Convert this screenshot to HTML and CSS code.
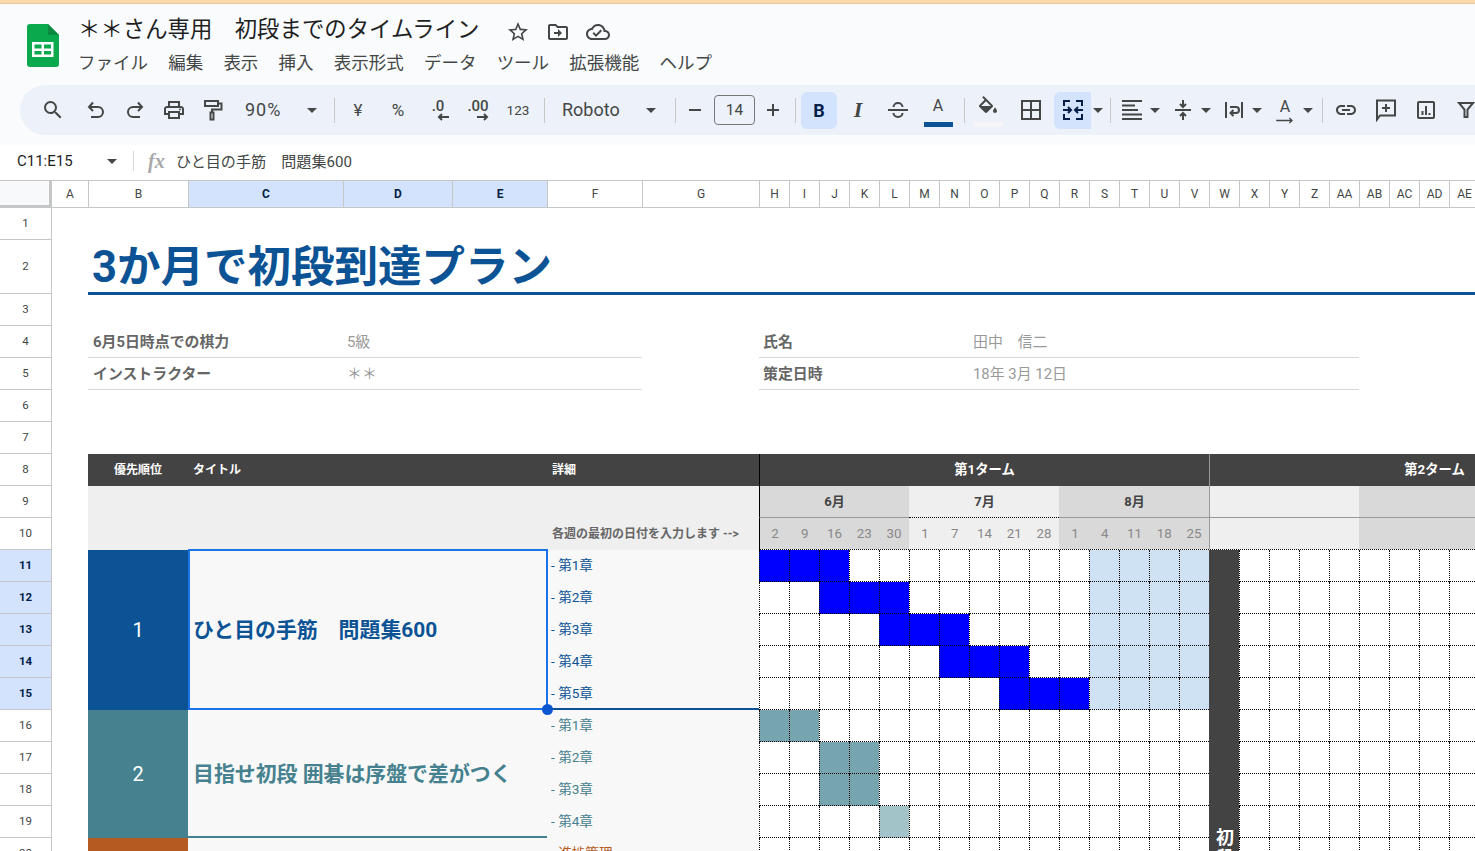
FILE: index.html
```html
<!DOCTYPE html>
<html lang="ja">
<head>
    <meta charset="UTF-8">
    <title>＊＊さん専用　初段までのタイムライン</title>
    <link rel="stylesheet" href="styles.css">
</head>
<body>
    <div class="stripe"></div>

    <header class="app-header">
        <div class="top">
            <svg class="logo" viewBox="0 0 32 43">
                <path d="M3 0H21L32 11V40a3 3 0 0 1-3 3H3a3 3 0 0 1-3-3V3a3 3 0 0 1 3-3z" fill="#0ba94e"/>
                <path d="M21 0L32 11H21z" fill="#0a8a3f"/>
                <path d="M5 18h21.5v15H5z" fill="#fff"/>
                <path d="M7.5 20.5h7v4h-7zM17 20.5h7v4h-7zM7.5 27h7v3.5h-7zM17 27h7v3.5h-7z" fill="#0ba94e"/>
            </svg>
            <div class="doc">
                <div class="doc-row">
                    <span class="doc-title">＊＊さん専用　初段までのタイムライン</span>
                    <div class="doc-icons">
                        <svg class="ic" viewBox="0 0 24 24"><path d="M22 9.24l-7.19-.62L12 2 9.19 8.63 2 9.24l5.46 4.73L5.82 21 12 17.27 18.18 21l-1.63-7.03L22 9.24zM12 15.4l-3.76 2.27 1-4.28-3.32-2.88 4.38-.38L12 6.1l1.71 4.04 4.38.38-3.32 2.88 1 4.28L12 15.4z"/></svg>
                        <svg class="ic" viewBox="0 0 24 24"><path d="M20 6h-8l-2-2H4c-1.1 0-2 .9-2 2v12c0 1.1.9 2 2 2h16c1.1 0 2-.9 2-2V8c0-1.1-.9-2-2-2zm0 12H4V6h5.17l2 2H20v10zm-8-4H8v-2h4V9l4 4-4 4v-3z"/></svg>
                        <svg class="ic" viewBox="0 0 24 24"><path d="M19.35 10.04C18.67 6.59 15.64 4 12 4 9.11 4 6.6 5.64 5.35 8.04 2.34 8.36 0 10.91 0 14c0 3.31 2.69 6 6 6h13c2.76 0 5-2.24 5-5 0-2.64-2.05-4.78-4.65-4.96zM19 18H6c-2.21 0-4-1.79-4-4 0-2.05 1.53-3.76 3.56-3.97l1.07-.11.5-.95C8.08 7.14 9.94 6 12 6c2.62 0 4.88 1.86 5.39 4.43l.3 1.5 1.53.11c1.56.1 2.78 1.41 2.78 2.96 0 1.65-1.35 3-3 3zm-9-3.82l-2.09-2.09L6.5 13.5 10 17l6.01-6.01-1.41-1.41z"/></svg>
                    </div>
                </div>
                <nav class="menu">
                    <span>ファイル</span><span>編集</span><span>表示</span><span>挿入</span><span>表示形式</span><span>データ</span><span>ツール</span><span>拡張機能</span><span>ヘルプ</span>
                </nav>
            </div>
        </div>

        <div class="toolbar">
            <div class="btn search"><svg class="ic" viewBox="0 0 24 24"><path d="M15.5 14h-.79l-.28-.27A6.471 6.471 0 0 0 16 9.5 6.5 6.5 0 1 0 9.5 16c1.61 0 3.09-.59 4.23-1.57l.27.28v.79l5 4.99L20.49 19l-4.99-5zm-6 0C7.01 14 5 11.99 5 9.5S7.01 5 9.5 5 14 7.01 14 9.5 11.99 14 9.5 14z"/></svg></div>
            <div class="btn narrow"><svg class="ic line" viewBox="0 0 24 24"><path d="M9 4.500L5 9l4 4M5.500 9H14a5 5 0 0 1 0 10H7"/></svg></div>
            <div class="btn narrow"><svg class="ic line" viewBox="0 0 24 24"><path d="M15 4.500L19 9l-4 4M18.500 9H10a5 5 0 0 0 0 10h7"/></svg></div>
            <div class="btn narrow"><svg class="ic" viewBox="0 0 24 24"><path d="M19 8h-1V3H6v5H5c-1.66 0-3 1.34-3 3v6h4v4h12v-4h4v-6c0-1.66-1.34-3-3-3zM8 5h8v3H8V5zm8 12v2H8v-4h8v2zm2-2v-2H6v2H4v-4c0-.55.45-1 1-1h14c.55 0 1 .45 1 1v4h-2z"/><circle cx="18" cy="11.5" r="1"/></svg></div>
            <div class="btn narrow"><svg class="ic line" viewBox="0 0 24 24"><path d="M4 3h13v5H4zM17 5.500h3.500v6H11v3M9.500 14.500h3v7h-3z"/></svg></div>
            <div class="select zoom"><span>90%</span><i class="caret"></i></div>
            <i class="sep first"></i>
            <div class="btn text">¥</div>
            <div class="btn text">%</div>
            <div class="btn stack"><span>.0</span><svg viewBox="0 0 12 8"><path d="M12 4H2M5 1L2 4l3 3"/></svg></div>
            <div class="btn stack"><span>.00</span><svg viewBox="0 0 12 8"><path d="M0 4h10M7 1l3 3-3 3"/></svg></div>
            <div class="btn small">123</div>
            <i class="sep"></i>
            <div class="select font"><span>Roboto</span><i class="caret"></i></div>
            <i class="sep"></i>
            <div class="btn minus"><svg class="ic line" viewBox="0 0 24 24"><path d="M6 12h12"/></svg></div>
            <div class="size-box">14</div>
            <div class="btn plus"><svg class="ic line" viewBox="0 0 24 24"><path d="M6 12h12M12 6v12"/></svg></div>
            <i class="sep"></i>
            <div class="btn active bold">B</div>
            <div class="btn italic">I</div>
            <div class="btn"><svg class="ic line" viewBox="0 0 24 24"><path d="M2 12h20M7.500 9a4.500 4 0 0 1 9 0M7.500 15a4.500 4 0 0 0 9 0"/></svg></div>
            <div class="btn swatch"><span class="swatch-a">A</span><i class="swatch-bar blue"></i></div>
            <i class="sep"></i>
            <div class="btn swatch"><svg class="ic fill-ic" viewBox="0 0 24 24"><path d="M16.56 8.94L7.62 0 6.21 1.41l2.38 2.38-5.15 5.15c-.59.59-.59 1.54 0 2.12l5.5 5.5c.29.29.68.44 1.06.44s.77-.15 1.06-.44l5.5-5.5c.59-.58.59-1.53 0-2.12zM5.21 10L10 5.21 14.79 10H5.21zM19 11.5s-2 2.17-2 3.500c0 1.1.9 2 2 2s2-.9 2-2c0-1.33-2-3.500-2-3.500z"/><path d="M5 10h10l-5 5z"/></svg><i class="swatch-bar pale"></i></div>
            <div class="btn borders"><svg class="ic line" viewBox="0 0 24 24"><path d="M3 3h18v18H3zM12 3v18M3 12h18"/></svg></div>
            <div class="btn active merge"><svg class="ic line navy" viewBox="0 0 24 24"><path d="M3 8V3h6M21 8V3h-6M3 16v5h6M21 16v5h-6M2 12h8M7 9l3 3-3 3M22 12h-8M17 9l-3 3 3 3"/></svg></div>
            <div class="merge-caret"><i class="caret"></i></div>
            <i class="sep"></i>
            <div class="combos">
                <div class="combo"><span class="combo-ic"><svg class="ic line" viewBox="0 0 24 24"><path d="M2 3h20M2 7.500h13M2 12h16M2 16.500h20M2 21h20"/></svg></span><i class="caret"></i></div>
                <div class="combo"><span class="combo-ic"><svg class="ic line" viewBox="0 0 24 24"><path d="M4 12h16M12 2v6.500M9 6l3 3 3-3M12 22v-6.500M9 18l3-3 3 3"/></svg></span><i class="caret"></i></div>
                <div class="combo"><span class="combo-ic"><svg class="ic line" viewBox="0 0 24 24"><path d="M4 4v16M20 4v16M8 9h6a3 3 0 0 1 0 6h-5M11.500 12L8.500 15l3 3"/></svg></span><i class="caret"></i></div>
                <div class="combo"><span class="combo-ic rotate"><span class="swatch-a">A</span><svg viewBox="0 0 20 8"><path d="M0 4h18M15 1l3 3-3 3"/></svg></span><i class="caret"></i></div>
            </div>
            <i class="sep"></i>
            <div class="btn"><svg class="ic" viewBox="0 0 24 24"><path d="M17 7h-4v2h4c1.65 0 3 1.35 3 3s-1.35 3-3 3h-4v2h4c2.76 0 5-2.24 5-5s-2.24-5-5-5zm-6 8H7c-1.65 0-3-1.35-3-3s1.35-3 3-3h4V7H7c-2.76 0-5 2.24-5 5s2.24 5 5 5h4v-2zm-3-4h8v2H8z"/></svg></div>
            <div class="btn"><svg class="ic line" viewBox="0 0 24 24"><path d="M3 2.500h18v15H6l-3 4zM12 6v8M8 10h8"/></svg></div>
            <div class="btn"><svg class="ic line" viewBox="0 0 24 24"><path d="M5 4h14a1 1 0 0 1 1 1v14a1 1 0 0 1-1 1H5a1 1 0 0 1-1-1V5a1 1 0 0 1 1-1zM8.500 17v-4M12 17V8M15.500 17v-2"/></svg></div>
            <div class="btn"><svg class="ic line" viewBox="0 0 24 24"><path d="M5 5h14l-5.500 6.500V19h-3v-7.500z"/></svg></div>
        </div>
    </header>

    <div class="formula-bar">
        <div class="name-box"><span>C11:E15</span><i class="caret"></i></div>
        <i class="formula-sep"></i>
        <span class="fx">fx</span>
        <span class="formula-text">ひと目の手筋　問題集600</span>
    </div>

    <main class="sheet">
        <div class="corner"></div>
        <div class="colhead">
            <div>A</div><div>B</div><div class="on">C</div><div class="on">D</div><div class="on">E</div><div>F</div><div>G</div><div>H</div><div>I</div><div>J</div><div>K</div><div>L</div><div>M</div><div>N</div><div>O</div><div>P</div><div>Q</div><div>R</div><div>S</div><div>T</div><div>U</div><div>V</div><div>W</div><div>X</div><div>Y</div><div>Z</div><div>AA</div><div>AB</div><div>AC</div><div>AD</div><div>AE</div>
        </div>
        <div class="rowhead">
            <div>1</div><div>2</div><div>3</div><div>4</div><div>5</div><div>6</div><div>7</div><div>8</div><div>9</div><div>10</div><div class="on">11</div><div class="on">12</div><div class="on">13</div><div class="on">14</div><div class="on">15</div><div>16</div><div>17</div><div>18</div><div>19</div><div>20</div>
        </div>

        <div class="plan-title">3か月で初段到達プラン</div>

        <div class="info-label left r4">6月5日時点での棋力</div>
        <div class="info-value left r4">5級</div>
        <div class="info-label left r5">インストラクター</div>
        <div class="info-value left r5">＊＊</div>
        <div class="info-label right r4">氏名</div>
        <div class="info-value right r4">田中　信二</div>
        <div class="info-label right r5">策定日時</div>
        <div class="info-value right r5">18年 3月 12日</div>

        <div class="band band-rank">優先順位</div>
        <div class="band band-title">タイトル</div>
        <div class="band band-detail">詳細</div>
        <div class="band term term-one">第1ターム</div>
        <div class="band term term-two">第2ターム</div>

        <div class="subfill"></div>
        <div class="subhead">各週の最初の日付を入力します --&gt;</div>

        <div class="month dark m1">6月</div>
        <div class="month light dotted m2">7月</div>
        <div class="month dark m3">8月</div>
        <div class="month light m4"></div>
        <div class="month dark m5"></div>

        <div class="dates dark m1"><span>2</span><span>9</span><span>16</span><span>23</span><span>30</span></div>
        <div class="dates light m2"><span>1</span><span>7</span><span>14</span><span>21</span><span>28</span></div>
        <div class="dates dark m3"><span>1</span><span>4</span><span>11</span><span>18</span><span>25</span></div>
        <div class="dates light m4"></div>
        <div class="dates dark m5"></div>

        <div class="rank group-1 c-blue">1</div>
        <div class="topic group-1 t-blue">ひと目の手筋　問題集600</div>
        <div class="details group-1 t-blue">
            <div>- 第1章</div><div>- 第2章</div><div>- 第3章</div><div>- 第4章</div><div>- 第5章</div>
        </div>
        <div class="selection"><i class="handle"></i></div>

        <div class="rank group-2 c-teal">2</div>
        <div class="topic group-2 t-teal">目指せ初段 囲碁は序盤で差がつく</div>
        <div class="details group-2 t-teal">
            <div>- 第1章</div><div>- 第2章</div><div>- 第3章</div><div>- 第4章</div>
        </div>

        <div class="rank group-3 c-orange"></div>
        <div class="topic group-3"></div>
        <div class="details group-3 t-orange"><div>- 進捗管理</div></div>

        <div class="gantt">
            <div class="term-break">初段到達</div>
            <i class="bar"></i><i class="bar"></i><i class="bar"></i><i></i><i></i><i></i><i></i><i></i><i></i><i></i><i></i><i class="sky"></i><i class="sky"></i><i class="sky"></i><i class="sky"></i><i></i><i></i><i></i><i></i><i></i><i></i><i></i><i></i>
            <i></i><i></i><i class="bar"></i><i class="bar"></i><i class="bar"></i><i></i><i></i><i></i><i></i><i></i><i></i><i class="sky"></i><i class="sky"></i><i class="sky"></i><i class="sky"></i><i></i><i></i><i></i><i></i><i></i><i></i><i></i><i></i>
            <i></i><i></i><i></i><i></i><i class="bar"></i><i class="bar"></i><i class="bar"></i><i></i><i></i><i></i><i></i><i class="sky"></i><i class="sky"></i><i class="sky"></i><i class="sky"></i><i></i><i></i><i></i><i></i><i></i><i></i><i></i><i></i>
            <i></i><i></i><i></i><i></i><i></i><i></i><i class="bar"></i><i class="bar"></i><i class="bar"></i><i></i><i></i><i class="sky"></i><i class="sky"></i><i class="sky"></i><i class="sky"></i><i></i><i></i><i></i><i></i><i></i><i></i><i></i><i></i>
            <i></i><i></i><i></i><i></i><i></i><i></i><i></i><i></i><i class="bar"></i><i class="bar"></i><i class="bar"></i><i class="sky"></i><i class="sky"></i><i class="sky"></i><i class="sky"></i><i></i><i></i><i></i><i></i><i></i><i></i><i></i><i></i>
            <i class="teal"></i><i class="teal"></i><i></i><i></i><i></i><i></i><i></i><i></i><i></i><i></i><i></i><i></i><i></i><i></i><i></i><i></i><i></i><i></i><i></i><i></i><i></i><i></i><i></i>
            <i></i><i></i><i class="teal"></i><i class="teal"></i><i></i><i></i><i></i><i></i><i></i><i></i><i></i><i></i><i></i><i></i><i></i><i></i><i></i><i></i><i></i><i></i><i></i><i></i><i></i>
            <i></i><i></i><i class="teal"></i><i class="teal"></i><i></i><i></i><i></i><i></i><i></i><i></i><i></i><i></i><i></i><i></i><i></i><i></i><i></i><i></i><i></i><i></i><i></i><i></i><i></i>
            <i></i><i></i><i></i><i></i><i class="pale-teal"></i><i></i><i></i><i></i><i></i><i></i><i></i><i></i><i></i><i></i><i></i><i></i><i></i><i></i><i></i><i></i><i></i><i></i><i></i>
            <i></i><i></i><i></i><i></i><i></i><i></i><i></i><i></i><i></i><i></i><i></i><i></i><i></i><i></i><i></i><i></i><i></i><i></i><i></i><i></i><i></i><i></i><i></i>
        </div>
    </main>
</body>
</html>
```

FILE: styles.css
```css
* {
    box-sizing: border-box;
}
body {
    margin: 0;
    height: 851px;
    overflow: hidden;
    background-color: #fff;
    color: #444746;
    font-family: Roboto, "Noto Sans CJK JP", sans-serif;
}

.stripe {
    height: 4px;
    background-color: #fdd9ae;
    border-bottom: 1px solid #e3c69f;
}

/* App header */
.app-header {
    height: 141px;
    background-color: #f9fbfd;
}
.top {
    display: flex;
    height: 81px;
    padding-left: 27px;
}
.logo {
    width: 32px;
    height: 43px;
    margin-top: 20px;
    margin-right: 20px;
}
.doc {
    margin-left: -1px;
    padding-top: 8px;
}
.doc-row {
    display: flex;
    align-items: center;
    height: 34px;
}
.doc-title {
    padding-bottom: 4px;
    font-size: 22.4px;
    color: #1f1f1f;
    white-space: nowrap;
}
.doc-icons {
    display: flex;
    gap: 16px;
    margin-left: 27px;
    margin-top: 5px;
}
.menu {
    display: flex;
    gap: 20.2px;
    height: 32px;
    align-items: center;
    padding-bottom: 2px;
    font-size: 17.5px;
    color: #444746;
    white-space: nowrap;
}

.ic {
    width: 24px;
    height: 24px;
    fill: #444746;
    flex: none;
}
.ic.line {
    fill: none;
    stroke: #444746;
    stroke-width: 2;
}
.ic.navy {
    stroke: #041e49;
}

/* Toolbar */
.toolbar {
    display: flex;
    align-items: center;
    height: 50px;
    margin-left: 20px;
    padding-left: 13px;
    background-color: #edf2fa;
    border-radius: 25px 0 0 25px;
    overflow: hidden;
}
.btn {
    display: flex;
    align-items: center;
    justify-content: center;
    flex: none;
    width: 40px;
    height: 37px;
}
.btn.search {
    margin-right: 3.5px;
}
.btn.narrow {
    width: 39px;
}
.btn.text {
    font-size: 17px;
}
.btn.small {
    font-size: 13.5px;
}
.btn.stack {
    flex-direction: column;
    align-items: center;
    line-height: 13px;
    font-size: 15px;
    font-weight: 500;
}
.btn.stack svg {
    width: 12px;
    height: 8px;
    margin-left: 10px;
    fill: none;
    stroke: #444746;
    stroke-width: 2;
}
.caret {
    display: block;
    flex: none;
    width: 0;
    height: 0;
    border-left: 5px solid transparent;
    border-right: 5px solid transparent;
    border-top: 5px solid #444746;
}
.select {
    display: flex;
    align-items: center;
    justify-content: space-between;
    flex: none;
    font-size: 18px;
}
.select span {
    margin-top: -2px;
}
.select.zoom {
    width: 92.5px;
    padding-left: 12.5px;
    padding-right: 8px;
    letter-spacing: 1px;
}
.select.font {
    width: 121px;
    padding-left: 14px;
    padding-right: 13px;
}
.sep {
    flex: none;
    width: 1px;
    height: 25px;
    margin-left: 6px;
    margin-right: 3px;
    background-color: #c7c7c7;
}
.sep.first {
    margin-left: 9px;
}
.btn.minus {
    width: 32px;
}
.size-box {
    flex: none;
    width: 41px;
    height: 30px;
    margin-left: 3px;
    border: 1px solid #747775;
    border-radius: 4px;
    font-size: 15.5px;
    line-height: 28px;
    text-align: center;
}
.btn.plus {
    width: 33px;
    margin-left: 1px;
}
.btn.active {
    background-color: #d3e3fd;
    color: #041e49;
    border-radius: 6px;
}
.btn.bold {
    width: 36px;
    margin-left: 2px;
    margin-right: 1px;
    font-size: 18px;
    font-weight: 700;
}
.btn.italic {
    font-family: "Liberation Serif", serif;
    font-style: italic;
    font-weight: 700;
    font-size: 22px;
}
.btn.swatch {
    position: relative;
}
.swatch-a {
    font-size: 16px;
    line-height: 20px;
}
.btn.swatch .swatch-a {
    margin-top: -8px;
}
.swatch-bar {
    position: absolute;
    left: 6px;
    bottom: 2px;
    width: 29px;
    height: 5px;
}
.swatch-bar.blue {
    background-color: #0b5394;
}
.swatch-bar.pale {
    background-color: #f5f5f5;
}
.fill-ic {
    margin-top: -4px;
}
.btn.borders {
    margin-left: 3px;
}
.btn.merge {
    width: 37px;
    margin-left: 3px;
    border-radius: 6px 0 0 6px;
}
.merge-caret {
    flex: none;
    width: 13px;
    padding-left: 2px;
}
.combos {
    display: flex;
    flex: none;
    width: 202px;
}
.combo {
    display: flex;
    align-items: center;
    flex: none;
    width: 51px;
}
.combo-ic {
    display: flex;
    align-items: center;
    justify-content: center;
    width: 36px;
}
.combo-ic.rotate {
    flex-direction: column;
}
.combo-ic.rotate svg {
    width: 18px;
    height: 7px;
    fill: none;
    stroke: #444746;
    stroke-width: 1.6;
}

/* Formula bar */
.formula-bar {
    display: flex;
    align-items: center;
    height: 35px;
    padding-bottom: 3px;
    background-color: #fff;
}
.name-box {
    display: flex;
    align-items: center;
    justify-content: space-between;
    width: 100px;
    margin-left: 17px;
    font-size: 15px;
    color: #1f1f1f;
}
.formula-sep {
    width: 1px;
    height: 20px;
    margin-left: 16px;
    background-color: #d9d9d9;
}
.fx {
    width: 28px;
    margin-left: 14px;
    font-family: "Liberation Serif", serif;
    font-style: italic;
    font-weight: 700;
    font-size: 20px;
    color: #a8a8a8;
}
.formula-text {
    margin-top: -3px;
    font-size: 15.1px;
    color: #444746;
    white-space: nowrap;
}

/* Sheet grid. Line numbers: column A = 2, row n = n + 1 */
.sheet {
    display: grid;
    grid-template-columns: 52px 36px 100px 155px 109px 95px 95px 117px repeat(40, 30px);
    grid-template-rows: 28px 32px 54px repeat(30, 32px);
    height: 671px;
    overflow: hidden;
    background-color: #fff;
    font-size: 12px;
}
.corner {
    grid-column: 1;
    grid-row: 1;
    background-color: #f8f9fa;
    border-top: 1px solid #c4c7c5;
    border-right: 3px solid #c4c7c5;
    border-bottom: 3px solid #c4c7c5;
}
.colhead {
    grid-column: 2 / -1;
    grid-row: 1;
    display: grid;
    grid-template-columns: subgrid;
}
.colhead div {
    display: flex;
    align-items: center;
    justify-content: center;
    border-top: 1px solid #c4c7c5;
    border-bottom: 1px solid #c4c7c5;
    border-left: 1px solid #c4c7c5;
    font-size: 12px;
    color: #444746;
}
.colhead div:first-child {
    border-left: 0;
}
.rowhead {
    grid-column: 1;
    grid-row: 2 / -1;
    display: grid;
    grid-template-rows: subgrid;
}
.rowhead div {
    display: flex;
    align-items: center;
    justify-content: center;
    padding-bottom: 2px;
    border-right: 1px solid #c4c7c5;
    border-bottom: 1px solid #c4c7c5;
    font-size: 11.5px;
    color: #444746;
}
.colhead .on, .rowhead .on {
    background-color: #d3e3fd;
    color: #041e49;
    font-weight: 700;
}

.plan-title {
    grid-column: 3 / -1;
    grid-row: 3;
    display: flex;
    align-items: center;
    margin-bottom: -1px;
    padding-left: 4px;
    padding-top: 4px;
    border-bottom: 3px solid #0b5394;
    color: #0b5394;
    font-size: 43.5px;
    font-weight: 700;
    line-height: 1;
    white-space: nowrap;
}

.info-label, .info-value {
    display: flex;
    align-items: center;
    padding-left: 4px;
    padding-bottom: 2px;
    border-bottom: 1px solid #d9d9d9;
    font-size: 14.9px;
    white-space: pre;
}
.info-label {
    color: #666;
    font-weight: 700;
}
.info-value {
    color: #999;
}
.r4 { grid-row: 5; }
.r5 { grid-row: 6; }
.info-label.left { grid-column: 3 / 5; padding-left: 5px; }
.info-value.left { grid-column: 5 / 8; }
.info-label.right { grid-column: 9 / 16; }
.info-value.right { grid-column: 16 / 29; }

/* Table header */
.band {
    grid-row: 9;
    display: flex;
    align-items: center;
    padding-bottom: 4px;
    background-color: #434343;
    color: #fff;
    font-size: 12px;
    font-weight: 700;
}
.band-rank {
    grid-column: 3;
    justify-content: center;
}
.band-title {
    grid-column: 4 / 7;
    padding-left: 5px;
}
.band-detail {
    grid-column: 7 / 9;
    padding-left: 5px;
}
.term {
    justify-content: center;
    font-size: 13.3px;
}
.term-one {
    grid-column: 9 / 24;
    border-left: 1px solid #000;
}
.term-two {
    grid-column: 24 / 39;
    border-left: 1px solid #999;
}
.subfill {
    grid-column: 3 / 7;
    grid-row: 10 / 12;
    background-color: #efefef;
}
.subhead {
    grid-column: 7 / 9;
    grid-row: 10 / 12;
    display: flex;
    align-items: flex-end;
    padding: 0 0 9px 5px;
    background-color: #efefef;
    color: #666;
    font-size: 12px;
    font-weight: 700;
    white-space: pre;
}

.month {
    grid-row: 10;
    display: flex;
    align-items: center;
    justify-content: center;
    padding-bottom: 3px;
    border-bottom: 1px solid #999;
    color: #434343;
    font-size: 13px;
    font-weight: 700;
}
.month.dotted {
    border-bottom: 1px dotted #000;
}
.dates {
    grid-row: 11;
    display: flex;
    padding-bottom: 2px;
    color: #888;
    font-size: 13.3px;
}
.dates span {
    display: flex;
    align-items: center;
    justify-content: center;
    width: 30px;
}
.dark { background-color: #d9d9d9; }
.light { background-color: #efefef; }
.m1 { grid-column: 9 / 14; border-left: 1px solid #000; }
.m2 { grid-column: 14 / 19; padding-left: 1px; }
.m3 { grid-column: 19 / 24; padding-left: 1px; }
.m4 { grid-column: 24 / 29; border-left: 1px solid #999; }
.m5 { grid-column: 29 / 34; }

/* Task groups */
.group-1 { grid-row: 12 / 17; }
.group-2 { grid-row: 17 / 21; }
.group-3 { grid-row: 21 / 25; }
.rank {
    grid-column: 3;
    display: flex;
    align-items: center;
    justify-content: center;
    color: #fff;
    font-size: 20px;
}
.c-blue { background-color: #0b5394; }
.c-teal { background-color: #45818e; }
.c-orange { background-color: #b55a20; }
.t-blue { color: #0b5394; }
.t-teal { color: #45818e; }
.t-orange { color: #b55a20; }
.topic {
    grid-column: 4 / 7;
    display: flex;
    align-items: center;
    padding-left: 5px;
    padding-bottom: 4px;
    background-color: #f8f8f8;
    font-size: 20.9px;
    font-weight: 700;
    white-space: pre;
}
.topic.group-2 {
    padding-bottom: 2px;
    border-bottom: 2px solid #45818e;
}
.details {
    grid-column: 7 / 9;
    background-color: #f8f8f8;
    font-size: 13.6px;
}
.details.group-1 {
    border-bottom: 2px solid #0b5394;
}
.details div {
    display: flex;
    align-items: center;
    height: 32px;
    padding-left: 4px;
    padding-bottom: 4px;
}
.selection {
    grid-column: 4 / 7;
    grid-row: 12 / 17;
    position: relative;
    margin-top: -1px;
    margin-right: -1px;
    border: 2px solid #1a73e8;
}
.handle {
    position: absolute;
    right: -7px;
    bottom: -7px;
    width: 11px;
    height: 11px;
    border-radius: 50%;
    background-color: #0b57d0;
}

/* Gantt area */
.gantt {
    grid-column: 9 / 33;
    grid-row: 12 / 22;
    display: grid;
    grid-template-columns: repeat(24, 30px);
    grid-auto-rows: 32px;
    margin-top: -1px;
    border-top: 1px dotted #000;
    background-color: #fff;
}
.gantt i {
    border-left: 1px dotted #000;
    border-bottom: 1px dotted #000;
}
.gantt .bar { background-color: #00f; }
.gantt .sky { background-color: #cfe2f3; }
.gantt .teal { background-color: #76a5af; }
.gantt .pale-teal { background-color: #a2c4c9; }
.term-break {
    grid-column: 16;
    grid-row: 1 / span 10;
    padding: 278px 5px 0 7px;
    background-color: #434343;
    color: #fff;
    font-size: 18px;
    font-weight: 700;
    line-height: 20px;
    word-break: break-all;
}
```
